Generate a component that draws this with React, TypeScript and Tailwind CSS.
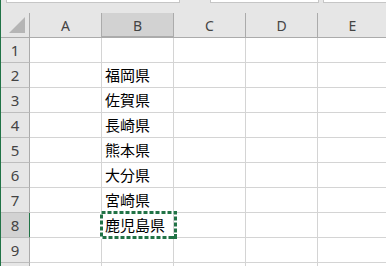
const cols = ["A", "B", "C", "D", "E"];
const colWidths = ["w-[72px]", "w-[72px]", "w-[72px]", "w-[72px]", "w-[69px]"];

const data: Record<number, string> = {
  2: "福岡県",
  3: "佐賀県",
  4: "長崎県",
  5: "熊本県",
  6: "大分県",
  7: "宮崎県",
  8: "鹿児島県",
};

const App = () => {
  const rows = [1, 2, 3, 4, 5, 6, 7, 8, 9, 10];

  return (
    <div
      className="relative w-[386px] h-[266px] overflow-hidden bg-[#e6e6e6] border-l border-[#217346]"
      style={{ fontFamily: "'Segoe UI', 'Noto Sans', sans-serif" }}
    >
      {/* formula bar remnants */}
      <div className="flex h-[13px]">
        <div className="ml-[5px] w-[174px] h-[3px] bg-white border border-t-0 border-[#c6c6c6]" />
        <div className="ml-[30px] w-[109px] h-[3px] bg-white border border-t-0 border-[#c6c6c6]" />
        <div className="ml-[4px] flex-1 h-[3px] bg-white border border-t-0 border-r-0 border-[#c6c6c6]" />
      </div>

      {/* column header */}
      <div className="flex h-[25px] border-b border-[#ababab]">
        <div className="relative w-[29px] shrink-0 border-r border-[#ababab]">
          <svg className="absolute right-[4px] bottom-[4px]" width="16" height="16" viewBox="0 0 16 16">
            <polygon points="16,0 16,16 0,16" fill="#b5b5b5" />
          </svg>
        </div>
        {cols.map((c, i) => (
          <div
            key={c}
            className={`${colWidths[i]} shrink-0 flex items-center justify-center text-[14px] text-[#444] pt-[1px] ${
              c === "B" ? "bg-[#d2d2d2] border-b-2 border-[#217346] -mb-[1px]" : ""
            } ${i < 4 ? "border-r border-[#ababab]" : ""}`}
          >
            {c}
          </div>
        ))}
      </div>

      {/* rows */}
      {rows.map((r) => (
        <div key={r} className="flex h-[25px]">
          <div
            className={`w-[29px] shrink-0 flex items-center justify-center text-[15px] text-[#444] border-b border-[#bdbdbd] ${
              r === 8 ? "bg-[#d2d2d2] border-r-2 border-r-[#217346] w-[30px] -mr-[1px]" : "border-r border-r-[#ababab]"
            }`}
          >
            {r < 10 ? r : ""}
          </div>
          {cols.map((c, i) => (
            <div
              key={c}
              className={`${colWidths[i]} shrink-0 bg-white border-b border-[#d4d4d4] ${
                i < 4 ? "border-r" : ""
              } flex items-center pl-[3px] text-[15px] text-black`}
              style={{ fontFamily: "'Noto Sans CJK JP', sans-serif" }}
            >
              {c === "B" ? data[r] ?? "" : ""}
            </div>
          ))}
        </div>
      ))}

      {/* copy marquee around B8 */}
      <div className="absolute left-[99px] top-[211px] w-[77px] h-[28px]">
        <svg width="77" height="28" viewBox="0 0 77 28" className="block">
          <rect x="1.5" y="1.5" width="74" height="25" fill="none" stroke="#ffffff" strokeWidth="3" />
          <rect x="1.5" y="1.5" width="74" height="25" fill="none" stroke="#217346" strokeWidth="3" strokeDasharray="4 2" />
          <rect x="72" y="23" width="5" height="5" fill="#217346" />
          <rect x="72" y="23" width="2" height="2" fill="#ffffff" />
        </svg>
      </div>
    </div>
  );
};

export default App;
